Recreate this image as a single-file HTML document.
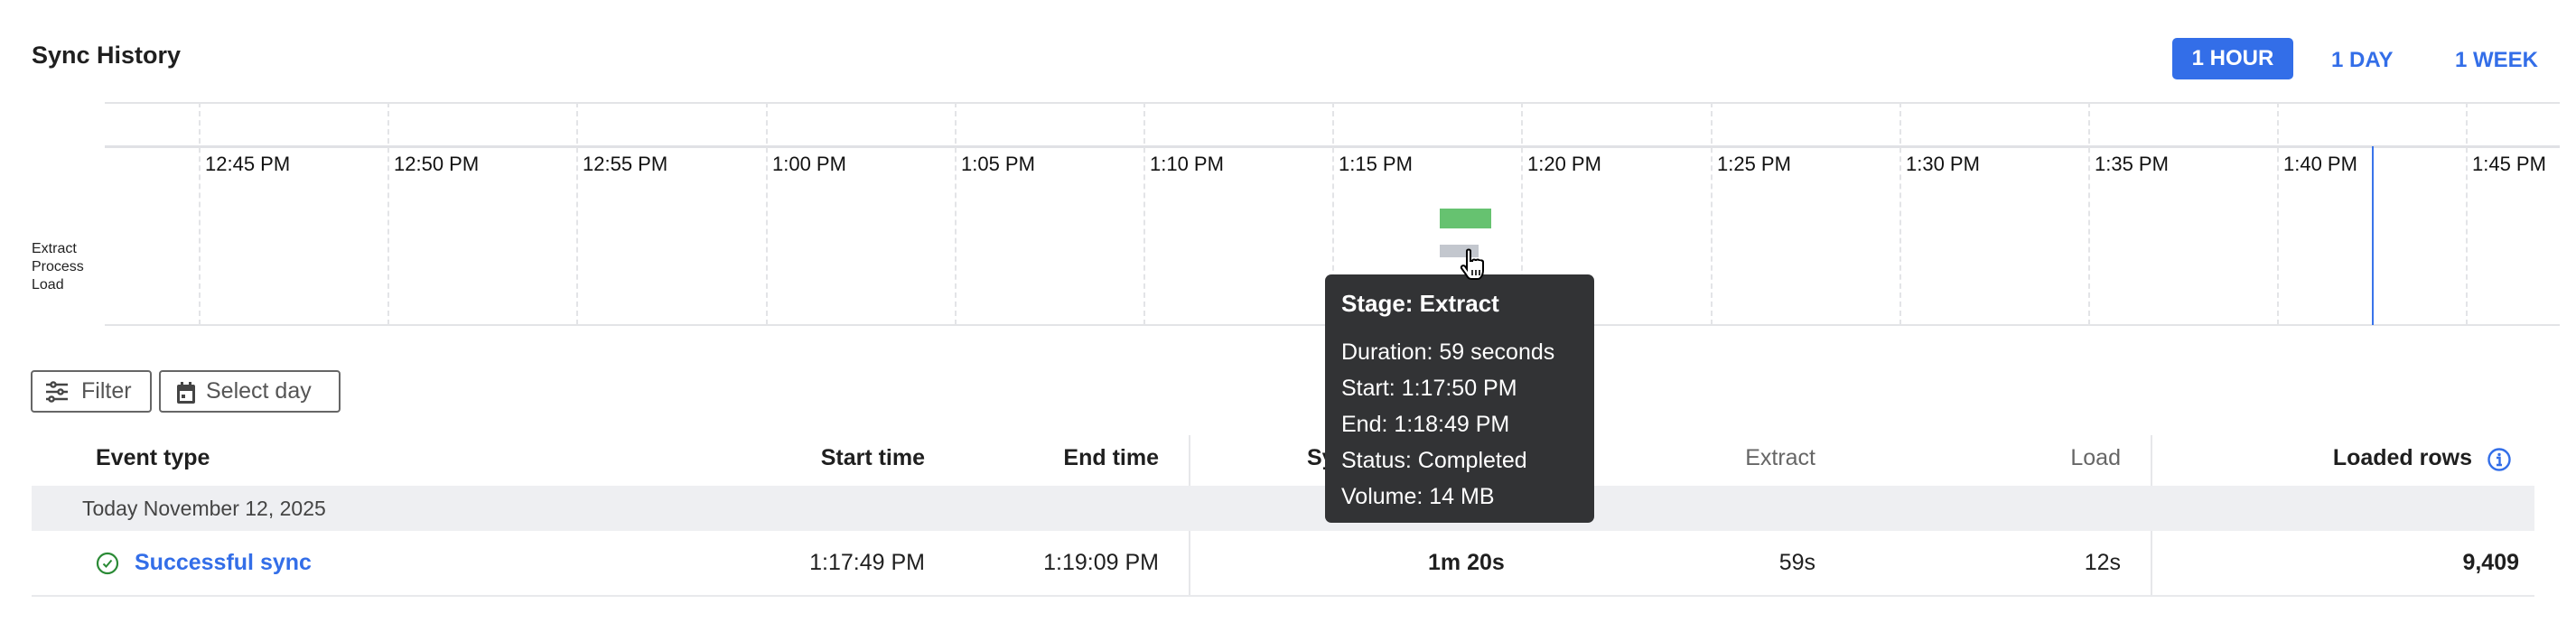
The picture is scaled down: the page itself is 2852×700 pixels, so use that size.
<!DOCTYPE html>
<html><head><meta charset="utf-8"><style>
*{margin:0;padding:0;box-sizing:border-box}
body{width:2852px;height:700px;background:#fff;font-family:"Liberation Sans",sans-serif;color:#1f1f1f;position:relative;overflow:hidden}
.a{position:absolute;white-space:nowrap}
.g{position:absolute;top:113px;height:247px;border-left:2px dashed #e3e4e7;width:0}
.lb{position:absolute;top:169px;font-size:22px;color:#111}
.h{font-size:25px;font-weight:bold;top:493px}
.c{font-size:25px;top:609px}
</style></head><body>
<div class="a" style="left:35px;top:46px;font-size:27px;font-weight:bold">Sync History</div>
<div class="a" style="left:2405px;top:42px;width:134px;height:46px;background:#336ee8;border-radius:5px;color:#fff;font-size:24px;font-weight:bold;text-align:center;line-height:46px">1 HOUR</div>
<div class="a" style="left:2581px;top:53px;color:#336ee8;font-size:24px;font-weight:bold">1 DAY</div>
<div class="a" style="left:2718px;top:53px;color:#336ee8;font-size:24px;font-weight:bold">1 WEEK</div>
<div class="a" style="left:116px;top:113px;width:2718px;height:2px;background:#e3e4e7"></div>
<div class="a" style="left:116px;top:161px;width:2718px;height:3px;background:#e0e1e5"></div>
<div class="a" style="left:116px;top:359px;width:2718px;height:2px;background:#e3e4e7"></div>
<div class="g" style="left:220px"></div><div class="g" style="left:429px"></div><div class="g" style="left:638px"></div><div class="g" style="left:848px"></div><div class="g" style="left:1057px"></div><div class="g" style="left:1266px"></div><div class="g" style="left:1475px"></div><div class="g" style="left:1684px"></div><div class="g" style="left:1894px"></div><div class="g" style="left:2103px"></div><div class="g" style="left:2312px"></div><div class="g" style="left:2521px"></div><div class="g" style="left:2730px"></div>
<div class="lb" style="left:227px">12:45 PM</div><div class="lb" style="left:436px">12:50 PM</div><div class="lb" style="left:645px">12:55 PM</div><div class="lb" style="left:855px">1:00 PM</div><div class="lb" style="left:1064px">1:05 PM</div><div class="lb" style="left:1273px">1:10 PM</div><div class="lb" style="left:1482px">1:15 PM</div><div class="lb" style="left:1691px">1:20 PM</div><div class="lb" style="left:1901px">1:25 PM</div><div class="lb" style="left:2110px">1:30 PM</div><div class="lb" style="left:2319px">1:35 PM</div><div class="lb" style="left:2528px">1:40 PM</div><div class="lb" style="left:2737px">1:45 PM</div>
<div class="a" style="left:2626px;top:162px;width:2px;height:198px;background:#3a74ea"></div>
<div class="a" style="left:35px;top:266px;font-size:16px;line-height:20px;color:#222">Extract<br>Process<br>Load</div>
<div class="a" style="left:1594px;top:231px;width:57px;height:22px;background:#66c270"></div>
<div class="a" style="left:1594px;top:271px;width:43px;height:14px;background:#c3c7ce"></div>
<div class="a h" style="left:106px">Event type</div>
<div class="a h" style="right:1828px">Start time</div>
<div class="a h" style="right:1569px">End time</div>
<div class="a h" style="left:1447px">Sync duration</div>
<div class="a h" style="right:842px;color:#666;font-weight:normal">Extract</div>
<div class="a h" style="right:504px;color:#666;font-weight:normal">Load</div>
<div class="a h" style="right:115px">Loaded rows</div>
<svg class="a" style="left:2753px;top:495px" width="28" height="28" viewBox="0 0 28 28"><circle cx="14" cy="14" r="11.5" fill="none" stroke="#336ee8" stroke-width="2.4"/><circle cx="14" cy="8.5" r="1.7" fill="#336ee8"/><path d="M11 12h3.5v8M11 20h6" stroke="#336ee8" stroke-width="2.4" fill="none"/></svg>
<div class="a" style="left:34px;top:410px;width:134px;height:47px;border:2px solid #666;border-radius:4px;font-size:25px;color:#555;line-height:43px;padding-left:54px">Filter
<svg style="position:absolute;left:14px;top:10px" width="26" height="24" viewBox="0 0 26 24" fill="none" stroke="#444" stroke-width="2.4"><path d="M1 4h24M1 12h24M1 20h24"/><circle cx="9" cy="4" r="2.6" fill="#fff"/><circle cx="17" cy="12" r="2.6" fill="#fff"/><circle cx="7" cy="20" r="2.6" fill="#fff"/></svg></div>
<div class="a" style="left:176px;top:410px;width:201px;height:47px;border:2px solid #666;border-radius:4px;font-size:25px;color:#555;line-height:43px;padding-left:50px">Select day
<svg style="position:absolute;left:17px;top:10px" width="22" height="26" viewBox="0 0 22 26"><rect x="1" y="4" width="20" height="21" rx="2" fill="#444"/><rect x="4" y="11" width="14" height="11" fill="#fff"/><rect x="5" y="1" width="3" height="5" fill="#444"/><rect x="14" y="1" width="3" height="5" fill="#444"/><rect x="6" y="15" width="4" height="4" fill="#444"/></svg></div>
<div class="a" style="left:1316px;top:482px;width:2px;height:178px;background:#e6e7ea"></div>
<div class="a" style="left:2381px;top:482px;width:2px;height:178px;background:#e6e7ea"></div>
<div class="a" style="left:35px;top:538px;width:2771px;height:50px;background:#eeeff2"></div>
<div class="a" style="left:91px;top:550px;font-size:23px;color:#444">Today November 12, 2025</div>
<svg class="a" style="left:106px;top:611px" width="26" height="26" viewBox="0 0 26 26"><circle cx="13" cy="13" r="11" fill="none" stroke="#2a8a35" stroke-width="2.2"/><path d="M8.5 13.5l3 3 6-7" fill="none" stroke="#2a8a35" stroke-width="2"/></svg>
<div class="a c" style="left:149px;color:#336ee8;font-weight:bold">Successful sync</div>
<div class="a c" style="right:1828px">1:17:49 PM</div>
<div class="a c" style="right:1569px">1:19:09 PM</div>
<div class="a c" style="left:1581px;font-weight:bold">1m 20s</div>
<div class="a c" style="right:842px">59s</div>
<div class="a c" style="right:504px">12s</div>
<div class="a c" style="right:63px;font-weight:bold">9,409</div>
<div class="a" style="left:35px;top:659px;width:2771px;height:2px;background:#e8e9ec"></div>
<div class="a" style="z-index:10;left:1467px;top:304px;width:298px;height:275px;background:#323335;border-radius:7px;color:#fff;padding:16px 0 0 18px">
<div style="font-size:26px;font-weight:bold;line-height:32px">Stage: Extract</div>
<div style="font-size:25px;line-height:40px;margin-top:18px">Duration: 59 seconds<br>Start: 1:17:50 PM<br>End: 1:18:49 PM<br>Status: Completed<br>Volume: 14 MB</div>
</div>
<svg class="a" style="z-index:11;left:1615px;top:275px" width="34" height="38" viewBox="0 0 34 38"><path d="M9 3c0-2 4-2 4 0v11l2 0c0-2 4-2 4 0 0-2 4-2 4 0 0-1 4-1 4 1v9c0 6-3 10-6 10h-7c-3 0-4-2-6-5l-5-7c-1-2 2-4 4-2l2 3z" fill="#fff" stroke="#000" stroke-width="2"/><path d="M15 24v6M19 24v6M23 24v6" stroke="#000" stroke-width="1.6"/></svg>
</body></html>
